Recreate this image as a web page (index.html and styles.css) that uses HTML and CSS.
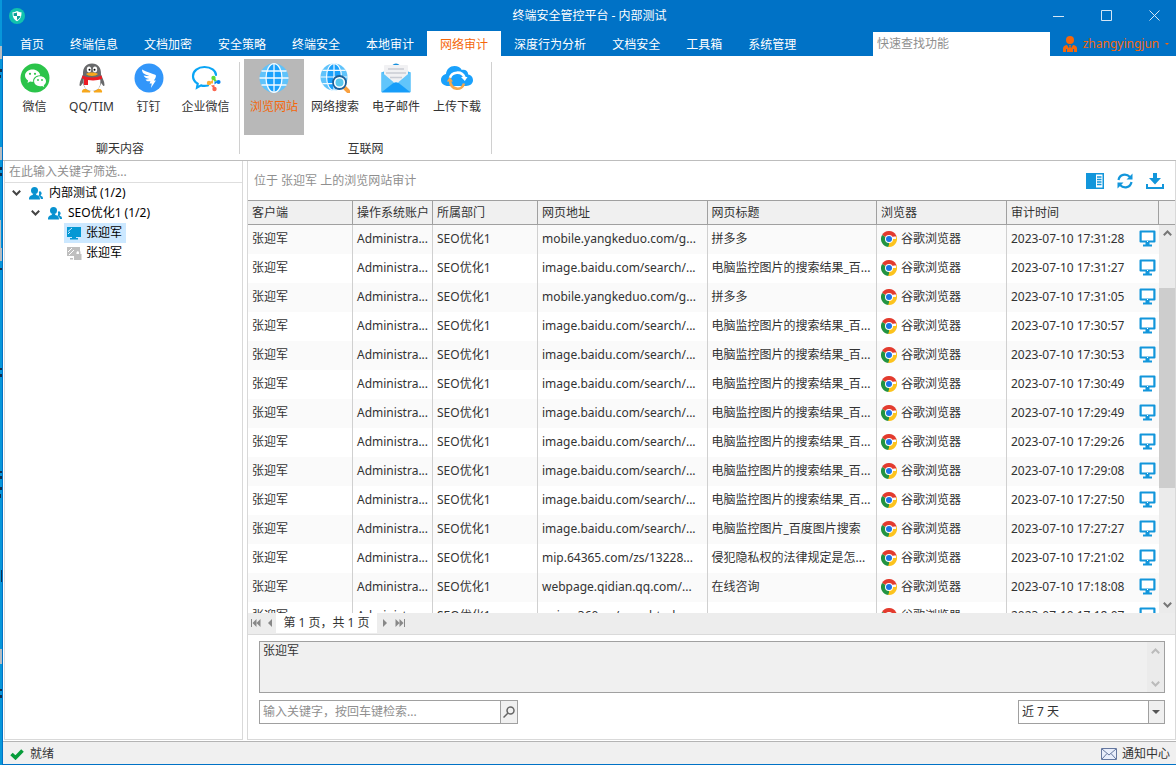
FILE: index.html
```html
<!DOCTYPE html>
<html lang="zh-CN">
<head>
<meta charset="utf-8">
<title>终端安全管控平台 - 内部测试</title>
<link rel="stylesheet" href="styles.css">
</head>
<body>
<svg class="defs" aria-hidden="true">
  <symbol id="users" viewBox="0 0 14 13"><path d="M9.800 4.700a1.900 1.900 0 1 1 1.900 3.300c0 .7.200.8 1 1.200.900.400 1.300 1 1.300 2.800h-2.200c-.2-1.700-.9-2.400-2.300-3 .7-1.200.9-2.800.3-4.300z"/><circle cx="5.500" cy="3.600" r="3.500"/><path d="M0 12.500c0-3 1-3.700 3.700-4.500L4 6.500h3L7.300 8c2.700.8 3.700 1.500 3.700 4.500z"/></symbol>
  <symbol id="chev" viewBox="0 0 9 6"><path d="M.8.8l3.700 3.700L8.200.8" fill="none" stroke="currentColor" stroke-width="2"/></symbol>
  <symbol id="screen" viewBox="0 0 17 17"><path d="M1.600 1.500h13.800v10H1.600z" fill="#fff" stroke="#1296db" stroke-width="2.200" stroke-linejoin="round"/><path d="M6.500 12h4v2.500H13v2H4v-2h2.500z" fill="#1296db"/><path d="M8 11h1v1H8z" fill="#fff"/></symbol>
  <symbol id="chrome" viewBox="0 0 16 16"><path d="M8 8L1.070 4A8 8 0 0 1 14.930 4z" fill="#e33b2e"/><path d="M8 8h6.930V4A8 8 0 0 1 8 16z" fill="#fcc31e"/><path d="M8 8l0 8A8 8 0 0 1 1.070 4z" fill="#229342"/><path d="M8 4h6.930l.6 1.500H8z" fill="#e33b2e"/><path d="M11.400 10L8 16l-.9-.100 1.500-4z" fill="#fcc31e"/><circle cx="8" cy="8" r="4" fill="#fff"/><circle cx="8" cy="8" r="3" fill="#1a73e8"/></symbol>
  <symbol id="globe" viewBox="0 0 30 30"><circle cx="15" cy="15" r="14.500" fill="#5fc3fb"/><ellipse cx="15" cy="15" rx="8" ry="14" fill="#1aa1fc"/><g fill="none" stroke="#f2faff" stroke-width="1.300"><path d="M15 .5v29M2.500 8h25M.5 15h29M2.500 22h25"/><ellipse cx="15" cy="15" rx="8" ry="14.300"/></g></symbol>
</svg>
<div class="screen">
  <svg class="desktop" viewBox="0 0 3 765" preserveAspectRatio="none" aria-hidden="true">
    <path d="M0 0h2v765H0z" fill="#0797da"/><path d="M2 0h1v765H2z" fill="#0072c6"/>
    <path d="M0 46h2v13H0zM0 147h2v13H0zM0 220h1v28H0zM0 248h2v13H0zM0 649h2v15H0z" fill="#b5bcc2"/>
    <path d="M0 69h2v3H0zM0 75h1v3H0zM0 167h2v3H0zM0 173h2v3H0zM0 268h2v2H0zM0 368h2v2H0zM0 374h2v3H0zM0 471h2v2H0zM0 476h2v3H0zM0 487h2v3H0zM0 494h1v4H0zM1 570h1v12H1zM0 689h2v2H0zM0 695h2v3H0z" fill="#10304f"/>
  </svg>
  <div class="window">
    <header class="titlebar">
      <div class="title-row">
        <svg class="app-icon" viewBox="0 0 16 16"><circle cx="8" cy="8" r="8" fill="#12c2ad"/><path d="M8 3c1.500 1 3 1.300 4.500 1.300 0 4.200-.9 7-4.500 9-3.600-2-4.500-4.800-4.500-9C5 4.300 6.500 4 8 3z" fill="#fff"/><path d="M8 4.400V8H4.700L4.600 5.200C6 5 7 4.800 8 4.400zM8 8h3.400c-.3 1.800-1.500 3.200-3.400 4z" fill="#0a9c98"/></svg>
        <h1>终端安全管控平台 - 内部测试</h1>
        <div class="win-buttons">
          <button aria-label="最小化"><svg viewBox="0 0 11 11"><path d="M0 6.500h11"/></svg></button>
          <button aria-label="最大化"><svg viewBox="0 0 11 11"><path d="M.5.5h10v10H.5z"/></svg></button>
          <button aria-label="关闭"><svg viewBox="0 0 11 11"><path d="M.5.5l10 10M10.500.5l-10 10"/></svg></button>
        </div>
      </div>
      <div class="menu-row">
        <nav class="tabs">
          <button>首页</button><button>终端信息</button><button>文档加密</button><button>安全策略</button><button>终端安全</button><button>本地审计</button><button class="active">网络审计</button><button>深度行为分析</button><button>文档安全</button><button>工具箱</button><button>系统管理</button>
        </nav>
        <input class="quick" type="text" aria-label="快速查找功能" placeholder="快速查找功能">
        <button class="account">
          <svg class="person" viewBox="0 0 14 16"><circle cx="7" cy="4" r="4"/><path d="M0 16v-3.500C0 10 2 9.400 4 9l3 5 3-5c2 .4 4 1 4 3.500V16z"/><path d="M6 9h2l-.5 1.500.8 3L7 15l-1.300-1.500.8-3z"/><path d="M3.500 13v3M10.500 13v3" stroke="#0072c6"/></svg>
          <span>zhangyingjun</span><i class="caret"></i>
        </button>
      </div>
    </header>

    <div class="ribbon">
      <section class="group chat">
        <div class="tools">
          <button><svg viewBox="0 0 30 30"><circle cx="15" cy="15" r="14.500" fill="#2bc44a"/><path d="M12.500 6.500c4 0 7.300 2.500 7.700 5.800-4.700 0-7.700 3-6.900 6.500-1 .1-2.200 0-3.200-.3L7.500 20l.6-2.400C6.200 16.300 5 14.600 5 12.600c0-3.400 3.400-6.100 7.500-6.100z" fill="#fff"/><path d="M20 13.200c3.500 0 6 2.300 6 5 0 1.600-.9 3-2.200 3.900l.4 1.900-2.100-1.100c-4.500 1.100-8-1.400-8-4.700 0-2.800 2.600-5 5.900-5z" fill="#fff"/><g fill="#2bc44a"><circle cx="10" cy="10.800" r="1.100"/><circle cx="15" cy="10.800" r="1.100"/><circle cx="18" cy="17" r=".9"/><circle cx="22" cy="17" r=".9"/></g></svg><span>微信</span></button>
          <button><svg viewBox="0 0 30 30"><path d="M7 26h7l-1 3.500H5c-.6-1.500.5-3 2-3.500zM16 26h7c1.500.5 2.600 2 2 3.500h-8z" fill="#f7a71b"/><path d="M15 .5c-6 0-9.300 4-9 11C5 14.500 2.500 18 2.500 22c0 1 .8 1.500 1.500.5l2-2.500c1 5.500 4.500 8 9 8s8-2.500 9-8l2 2.500c.7 1 1.500.5 1.500-.5 0-4-2.500-7.500-3.500-10.500.3-7-3-11-9-11z" fill="#68696b"/><path d="M7 15c-1.500 8 1.500 13 8 13s9.500-5 8-13z" fill="#fff"/><path d="M5.500 12.500c5 2.500 14 2.500 19 0l.7 3.300c-4 1.700-9 2-14.200 1.300v5H7v-6l-2.200-.6z" fill="#ec1c24"/><ellipse cx="12" cy="6.500" rx="2.200" ry="3" fill="#fff"/><ellipse cx="18" cy="6.500" rx="2.200" ry="3" fill="#fff"/><circle cx="12.500" cy="6.800" r="1"/><circle cx="17.500" cy="6.800" r="1"/><path d="M9 11c3-2 9-2 12 0-2 2.500-10 2.500-12 0z" fill="#f7a71b"/></svg><span>QQ/TIM</span></button>
          <button><svg viewBox="0 0 30 30"><circle cx="15" cy="15" r="14.500" fill="#3296fa"/><path d="M8 6.500c4.800 2.700 9.600 3.700 13.200 5.300 1 .5.900 1.500.4 2.700-.7 1.600-1.700 2.900-1.700 2.900h2l-5 7.600.9-4.600h-2.200l.8-2.200c-2.700.5-4-.3-4.900-1.800 1.700.1 2.800 0 3.900-.4-3.200-.4-5-1.700-5.700-3.500 2 .5 3.700.6 5.400.2C10.200 11.300 8 10 8 6.500z" fill="#fff"/></svg><span>钉钉</span></button>
          <button><svg viewBox="0 0 30 30"><path d="M17 22.500c-2 .5-5 .6-7-.1L6 24.600l.7-3.900C3.600 18.700 2 16.300 2 13.200 2 7.800 7 4 13.500 4S25 7.600 25 12" fill="none" stroke="#0aa5f5" stroke-width="2.200" stroke-linecap="round"/><circle cx="22.500" cy="15" r="2.200" fill="#5edb3c"/><path d="M22.500 14l3.500 4-3 .5z" fill="#5edb3c"/><circle cx="27.500" cy="19" r="2.100" fill="#0082ef"/><path d="M28 18l-4.500 3.500v-3z" fill="#0082ef"/><circle cx="23.500" cy="26" r="2.200" fill="#fb6650"/><path d="M24 27l-4-4.500 3.300-.5z" fill="#fb6650"/><circle cx="18" cy="20" r="2.200" fill="#ffad33"/><path d="M17.500 20.500l4.500-4v4z" fill="#ffad33"/></svg><span>企业微信</span></button>
        </div>
        <h2>聊天内容</h2>
      </section>
      <section class="group net">
        <div class="tools">
          <button class="selected"><svg><use href="#globe"/></svg><span>浏览网站</span></button>
          <button><svg viewBox="0 0 30 30"><use href="#globe" width="28" height="28"/><path d="M25 25l4 4" stroke="#f9a03f" stroke-width="4" stroke-linecap="round"/><circle cx="19.500" cy="19.500" r="6.500" fill="#fff" stroke="#1d5f98" stroke-width="1.800"/><circle cx="19.500" cy="19.500" r="4" fill="#59c7ed"/></svg><span>网络搜索</span></button>
          <button><svg viewBox="0 0 30 30"><path d="M11 3c1-3.500 7-3.500 8 0z" fill="#168fdd"/><path d="M.5 9.500L4 8h22l3.500 1.500V29H.5z" fill="#48b7f7"/><path d="M3 3q0-1 1-1h22q1 0 1 1v11L15 22 3 14z" fill="#f1f1f3"/><path d="M7 6h16M5 10h20M9 14.500h12" stroke="#c9ccd4" stroke-width="1.500"/><path d="M.5 9L13 19.500.5 29zM29.500 9L17 19.500 29.500 29z" fill="#61c5fb"/><path d="M.5 29.500L12.500 20q2.500-1.500 5 0l12 9.500z" fill="#169df9"/></svg><span>电子邮件</span></button>
          <button><svg class="wide" viewBox="0 0 32 30"><path d="M7.500 23C3 23 0 20.500 0 17c0-3.200 2.400-5.500 5-6C5.500 6 9 3 13.500 3c3.300 0 6 1.600 7.300 4 3.700-.8 6.200 1.400 6.400 4.500 3 .4 4.800 3 4.800 5.800 0 3.500-3 5.700-7 5.700z" fill="#1aa1fc"/><path d="M9 15c1.500-6.500 12-7.500 14.500-.5" fill="none" stroke="#fff" stroke-width="2.600"/><path d="M20 14h6.500l-2.700 4z" fill="#fff"/><path d="M23 20.500c-2 7.500-13 7-14-2.500" fill="none" stroke="#f6a84c" stroke-width="2.600"/><path d="M5.800 18.500l3-4.500 3.200 4.500z" fill="#f6a84c"/></svg><span>上传下载</span></button>
        </div>
        <h2>互联网</h2>
      </section>
    </div>

    <main>
      <aside>
        <input class="filter" type="text" aria-label="筛选" placeholder="在此输入关键字筛选...">
        <ul class="tree">
          <li class="l1"><svg class="chev"><use href="#chev"/></svg><svg class="users"><use href="#users"/></svg><span>内部测试 (1/2)</span></li>
          <li class="l2"><svg class="chev"><use href="#chev"/></svg><svg class="users"><use href="#users"/></svg><span>SEO优化1 (1/2)</span></li>
          <li class="l3"><a class="current" href="#"><svg viewBox="0 0 16 14"><path d="M1 1h14v9H1zM4 12h8v1.500H4zM6 10h4v2H6z" fill="#0398d4"/><path d="M1 10.500h14" stroke="#0398d4"/><path d="M2 5.500L6 2M2 8l2-2" stroke="#cce8ff"/></svg><span>张迎军</span></a></li>
          <li class="l3"><a href="#"><svg viewBox="0 0 16 14"><path d="M1 1h13v4h-3L8 10H1zM4 12h3v1.500H4z" fill="#bfbfbf"/><path d="M2 6l4-4M3 9l5-5" stroke="#fff"/><path d="M8 8h7.500v6H8z" fill="#bfbfbf"/><path d="M9.700 8V6.500a2 2 0 0 1 4 0V8" fill="none" stroke="#bfbfbf" stroke-width="1.500"/></svg><span>张迎军</span></a></li>
        </ul>
      </aside>

      <section class="content">
        <div class="toolbar">
          <p>位于 张迎军 上的浏览网站审计</p>
          <div class="actions">
            <button aria-label="详情面板"><svg viewBox="0 0 18 16"><path d="M0 0h18v16H0z" fill="#1296db"/><path d="M10 1.500h6.500v13H10z" fill="#fff"/><path d="M11 4h4.500M11 6.500h4.500M11 9h4.500M11 11.500h4.500" stroke="#1296db" stroke-width="1.300"/></svg></button>
            <button aria-label="刷新"><svg viewBox="0 0 18 16"><g fill="none" stroke="#1296db" stroke-width="2.200"><path d="M2.500 7C3.500 1.500 10 0 14 4"/><path d="M15.500 9C14.500 14.500 8 16 4 12"/></g><path d="M16.500.5v6h-6zM1.500 15.500v-6h6z" fill="#1296db"/></svg></button>
            <button aria-label="导出"><svg viewBox="0 0 18 16"><path d="M7 0h4v5h4l-6 6.500L3 5h4z" fill="#1296db"/><path d="M1 11v4h16v-4" fill="none" stroke="#1296db" stroke-width="2"/></svg></button>
          </div>
        </div>
        <div class="grid">
          <div class="table-wrap">
            <table>
              <colgroup><col class="c-client"><col class="c-os"><col class="c-dept"><col><col><col class="c-browser"><col class="c-time"></colgroup>
              <thead><tr><th>客户端</th><th>操作系统账户</th><th>所属部门</th><th>网页地址</th><th>网页标题</th><th>浏览器</th><th>审计时间</th></tr></thead>
              <tbody id="rows"></tbody>
            </table>
          </div>
          <div class="side">
            <div class="side-head"></div>
            <div class="scrollbar"><svg class="up"><use href="#chev"/></svg><div class="track"><div class="thumb"></div></div><svg><use href="#chev"/></svg></div>
          </div>
        </div>
        <div class="pager">
          <button aria-label="首页"><svg viewBox="0 0 10 8"><path d="M0 0h1v8H0zM5.500 0v8L1.500 4zM9.500 0v8L5.500 4z"/></svg></button>
          <button aria-label="上一页"><svg viewBox="0 0 10 8"><path d="M7 0v8L3 4z"/></svg></button>
          <span>第 1 页，共 1 页</span>
          <button aria-label="下一页"><svg viewBox="0 0 10 8"><path d="M3 0v8l4-4z"/></svg></button>
          <button aria-label="末页"><svg viewBox="0 0 10 8"><path d="M9 0h1v8H9zM.5 0v8l4-4zM4.500 0v8l4-4z"/></svg></button>
        </div>
        <div class="detail">
          <div class="memo">
            <textarea aria-label="详细内容" readonly>张迎军</textarea>
            <div class="memo-scroll"><svg class="up"><use href="#chev"/></svg><svg><use href="#chev"/></svg></div>
          </div>
          <div class="search-row">
            <form class="search">
              <input type="text" aria-label="检索关键字" placeholder="输入关键字，按回车键检索...">
              <button type="button" aria-label="检索"><svg viewBox="0 0 12 12"><circle cx="7.500" cy="4.500" r="3.500"/><path d="M5 7l-4.500 4.500"/></svg></button>
            </form>
            <div class="range"><select aria-label="时间范围"><option>近 7 天</option></select><i class="caret"></i></div>
          </div>
        </div>
      </section>
    </main>

    <footer>
      <div class="ready"><svg viewBox="0 0 14 12"><path d="M1.500 6l4 3.700L12.500 2.500" fill="none" stroke="#079c3b" stroke-width="3.600"/></svg><span>就绪</span></div>
      <button class="notice"><svg viewBox="0 0 16 12"><path d="M.5.5h15v11H.5z" fill="#e8eefb" stroke="#64779f"/><path d="M1 1l7 6 7-6M1 11l5-5.500M15 11l-5-5.500" fill="none" stroke="#64779f"/></svg><span>通知中心</span></button>
    </footer>
  </div>
</div>
<script src="rows.js"></script>
</body>
</html>
```

FILE: styles.css
```css
* { box-sizing: border-box; }
body {
  margin: 0;
  font: 12px/18px "Noto Sans", "Noto Sans CJK SC", sans-serif;
  color: #333;
  background: #fff;
}
button, input, textarea, select { font: inherit; color: inherit; margin: 0; }
button { border: 0; padding: 0; background: none; display: flex; align-items: center; justify-content: center; }
input::placeholder { color: #8f8f8f; opacity: 1; }
h1, h2, p, ul { margin: 0; padding: 0; font-size: 12px; font-weight: 400; }
ul { list-style: none; }
svg { display: block; flex: none; }
.defs { display: none; }

.screen { display: flex; height: 100vh; }
.desktop { width: 3px; height: 100%; }
.window { flex: 1; min-width: 0; display: flex; flex-direction: column; border-bottom: 1px solid #0072c6; }

.titlebar { background: #0072c6; color: #fff; }
.title-row { display: grid; grid-template-columns: 1fr auto 1fr; align-items: center; height: 31px; }
.app-icon { width: 16px; height: 16px; margin-left: 6px; }
.win-buttons { display: flex; justify-content: flex-end; gap: 8px; padding-right: 2px; }
.win-buttons button { width: 40px; height: 30px; }
.win-buttons svg { width: 11px; height: 11px; fill: none; stroke: #d5e6f5; }
.menu-row { display: flex; height: 25px; padding-left: 4px; }
.tabs { display: flex; flex: 1; }
.tabs button { padding: 2px 13px 0; white-space: nowrap; }
.tabs .active { background: #fff; color: #f4670b; }
.quick { width: 177px; border: 0; margin-top: 1px; padding: 0 4px; background: #fff; color: #333; }
.account { width: 126px; gap: 6px; padding-left: 6px; color: #f4670b; }
.person { width: 14px; height: 16px; fill: #f4670b; }
.caret { border: 3px solid transparent; border-top-color: currentColor; border-bottom: 0; }
.account .caret { border-width: 2px; border-bottom: 0; }

.ribbon { display: flex; height: 105px; padding: 3px 0 0 3px; border-bottom: 1px solid #bdbdbd; }
.group { display: flex; flex-direction: column; justify-content: space-between; height: 100px; position: relative; }
.group::after { content: ""; position: absolute; right: 0; top: 3px; bottom: 5px; width: 1px; background: #d0d0d0; }
.tools { display: flex; }
.tools button { flex-direction: column; justify-content: flex-start; gap: 5px; height: 76px; padding-top: 4px; white-space: nowrap; }
.tools svg { width: 30px; height: 30px; }
.tools .wide { width: 32px; }
.chat { padding-right: 6px; }
.chat button { width: 57px; }
.net { padding: 0 5px 0 4px; }
.net .tools { gap: 1px; }
.net button { width: 60px; }
.tools .selected { background: #b8b8b8; color: #f4670b; }
.group h2 { text-align: center; line-height: 20px; }

main { flex: 1; min-height: 0; display: flex; gap: 4px; padding: 0 0 1px 1px; }
aside { width: 239px; border: 1px solid #d9d9d9; border-top: 0; flex: none; }
.filter { display: block; width: 100%; height: 22px; border: 0; border-bottom: 1px solid #dedede; padding: 0 4px; outline: 0; }
.tree li { display: flex; align-items: center; height: 20px; color: #000; }
.l1 { padding-left: 7px; }
.l2 { padding-left: 26px; }
.l3 { padding-left: 59px; }
.chev { width: 9px; height: 6px; color: #444; }
.users { width: 14px; height: 13px; margin: 0 6px 0 8px; fill: #0892d0; }
.tree a { display: flex; align-items: center; gap: 4px; height: 20px; padding: 0 4px 0 2px; color: #000; text-decoration: none; }
.tree a svg { width: 16px; height: 14px; }
.tree .current { background: #cce8ff; }

.content { flex: 1; min-width: 0; display: flex; flex-direction: column; border: 1px solid #d9d9d9; border-top: 0; }
.toolbar { display: flex; align-items: center; justify-content: space-between; height: 39px; padding: 0 11px 0 6px; color: #8f8f8f; }
.actions { display: flex; gap: 12px; }
.actions svg { width: 18px; height: 16px; }
.grid { flex: 1; min-height: 0; display: flex; overflow: hidden; }
.table-wrap { flex: 1; min-width: 0; overflow: hidden; }
table { width: 100%; table-layout: fixed; border-collapse: separate; border-spacing: 0; }
.c-client, .c-dept { width: 105px; }
.c-os { width: 80px; }
.c-browser { width: 130px; }
.c-time { width: 152px; }
th, td { padding: 0 0 0 4px; text-align: left; font-weight: 400; white-space: nowrap; overflow: hidden; border-right: 1px solid #d0d0d0; }
th { height: 25px; background: #f0f0f0; border-top: 1px solid #a0a0a0; border-bottom: 1px solid #a0a0a0; border-right-color: #a0a0a0; }
td { height: 29px; padding-bottom: 2px; }
td:last-child { border-right: 0; }
tbody tr:nth-child(odd) { background: #fafafa; }
.cell { display: flex; align-items: center; gap: 4px; }
.cell svg { width: 16px; height: 16px; }
.time { justify-content: space-between; padding-right: 3px; }
.cell .shot { width: 17px; height: 17px; }
.side { width: 16px; flex: none; display: flex; flex-direction: column; }
.side-head { height: 25px; background: #f0f0f0; border-top: 1px solid #a0a0a0; border-bottom: 1px solid #a0a0a0; }
.scrollbar { flex: 1; display: flex; flex-direction: column; align-items: center; padding: 5px 0; background: #ebebeb; color: #777; }
.scrollbar svg, .memo-scroll svg { width: 9px; height: 6px; }
.up { transform: rotate(180deg); }
.track { flex: 1; width: 100%; display: grid; grid-template-rows: 52fr 200fr 114fr; }
.thumb { grid-row: 2; background: #cdcdcd; }

.pager { display: flex; align-items: center; height: 22px; padding: 0 1px 1px; background: #ededed; border-bottom: 1px solid #dadada; }
.pager span { height: 20px; line-height: 20px; min-width: 101px; text-align: center; background: #fff; }
.pager button { width: 13px; height: 20px; }
.pager button:first-child { margin-right: 1px; }
.pager svg { width: 10px; height: 8px; fill: #888; }
.pager span + button { margin: 0 2px 0 1px; }

.detail { height: 104px; padding: 6px 10px 0 11px; }
.memo { display: flex; height: 52px; border: 1px solid #a0a0a0; background: #f0f0f0; }
.memo textarea { flex: 1; border: 0; padding: 0 3px; background: none; resize: none; outline: 0; overflow: hidden; }
.memo-scroll { width: 17px; display: flex; flex-direction: column; align-items: center; justify-content: space-between; padding: 6px 0 5px; background: #ebebeb; color: #bbb; }
.search-row { display: flex; justify-content: space-between; margin-top: 7px; }
.search { display: flex; width: 259px; height: 24px; border: 1px solid #a0a0a0; }
.search input { flex: 1; min-width: 0; border: 0; padding: 0 3px; outline: 0; }
.search button { width: 17px; border-left: 1px solid #a0a0a0; background: #f0f0f0; }
.search svg { width: 12px; height: 12px; fill: none; stroke: #666; stroke-width: 1.500; }
.range { position: relative; width: 147px; height: 24px; border: 1px solid #a0a0a0; background: linear-gradient(90deg, transparent calc(100% - 16px), #a0a0a0 0, #a0a0a0 calc(100% - 15px), #f0f0f0 0); }
.range select { appearance: none; width: 100%; height: 22px; border: 0; padding: 0 3px; background: none; }
.range .caret { position: absolute; right: 4px; top: 9px; border-width: 4px; border-bottom: 0; color: #555; pointer-events: none; }

footer { display: flex; align-items: center; justify-content: space-between; height: 23px; padding: 2px 6px 0 7px; background: #f0f0f0; border-top: 1px solid #b4b4b4; }
.ready, .notice { display: flex; align-items: center; gap: 6px; }
.ready svg { width: 14px; height: 12px; }
.notice { gap: 5px; }
.notice svg { width: 16px; height: 12px; }
```

FILE: rows.js
```js
const search = ["image.baidu.com/search/...", "电脑监控图片的搜索结果_百..."];
const shop = ["mobile.yangkeduo.com/g...", "拼多多"];
const visits = [
  [...shop, "17:31:28"],
  [...search, "17:31:27"],
  [...shop, "17:31:05"],
  [...search, "17:30:57"],
  [...search, "17:30:53"],
  [...search, "17:30:49"],
  [...search, "17:29:49"],
  [...search, "17:29:26"],
  [...search, "17:29:08"],
  [...search, "17:27:50"],
  [search[0], "电脑监控图片_百度图片搜索", "17:27:27"],
  ["mip.64365.com/zs/13228...", "侵犯隐私权的法律规定是怎...", "17:21:02"],
  ["webpage.qidian.qq.com/...", "在线咨询", "17:18:08"],
  ["union.360.cn/searchtod...", "", "17:18:07"]
];
document.getElementById("rows").innerHTML = visits.map(([url, title, time]) => `
  <tr><td>张迎军</td><td>Administra...</td><td>SEO优化1</td><td>${url}</td><td>${title}</td>
  <td><div class="cell"><svg><use href="#chrome"/></svg><span>谷歌浏览器</span></div></td>
  <td><div class="cell time"><span>2023-07-10 ${time}</span><svg class="shot"><use href="#screen"/></svg></div></td></tr>`).join("");
```
